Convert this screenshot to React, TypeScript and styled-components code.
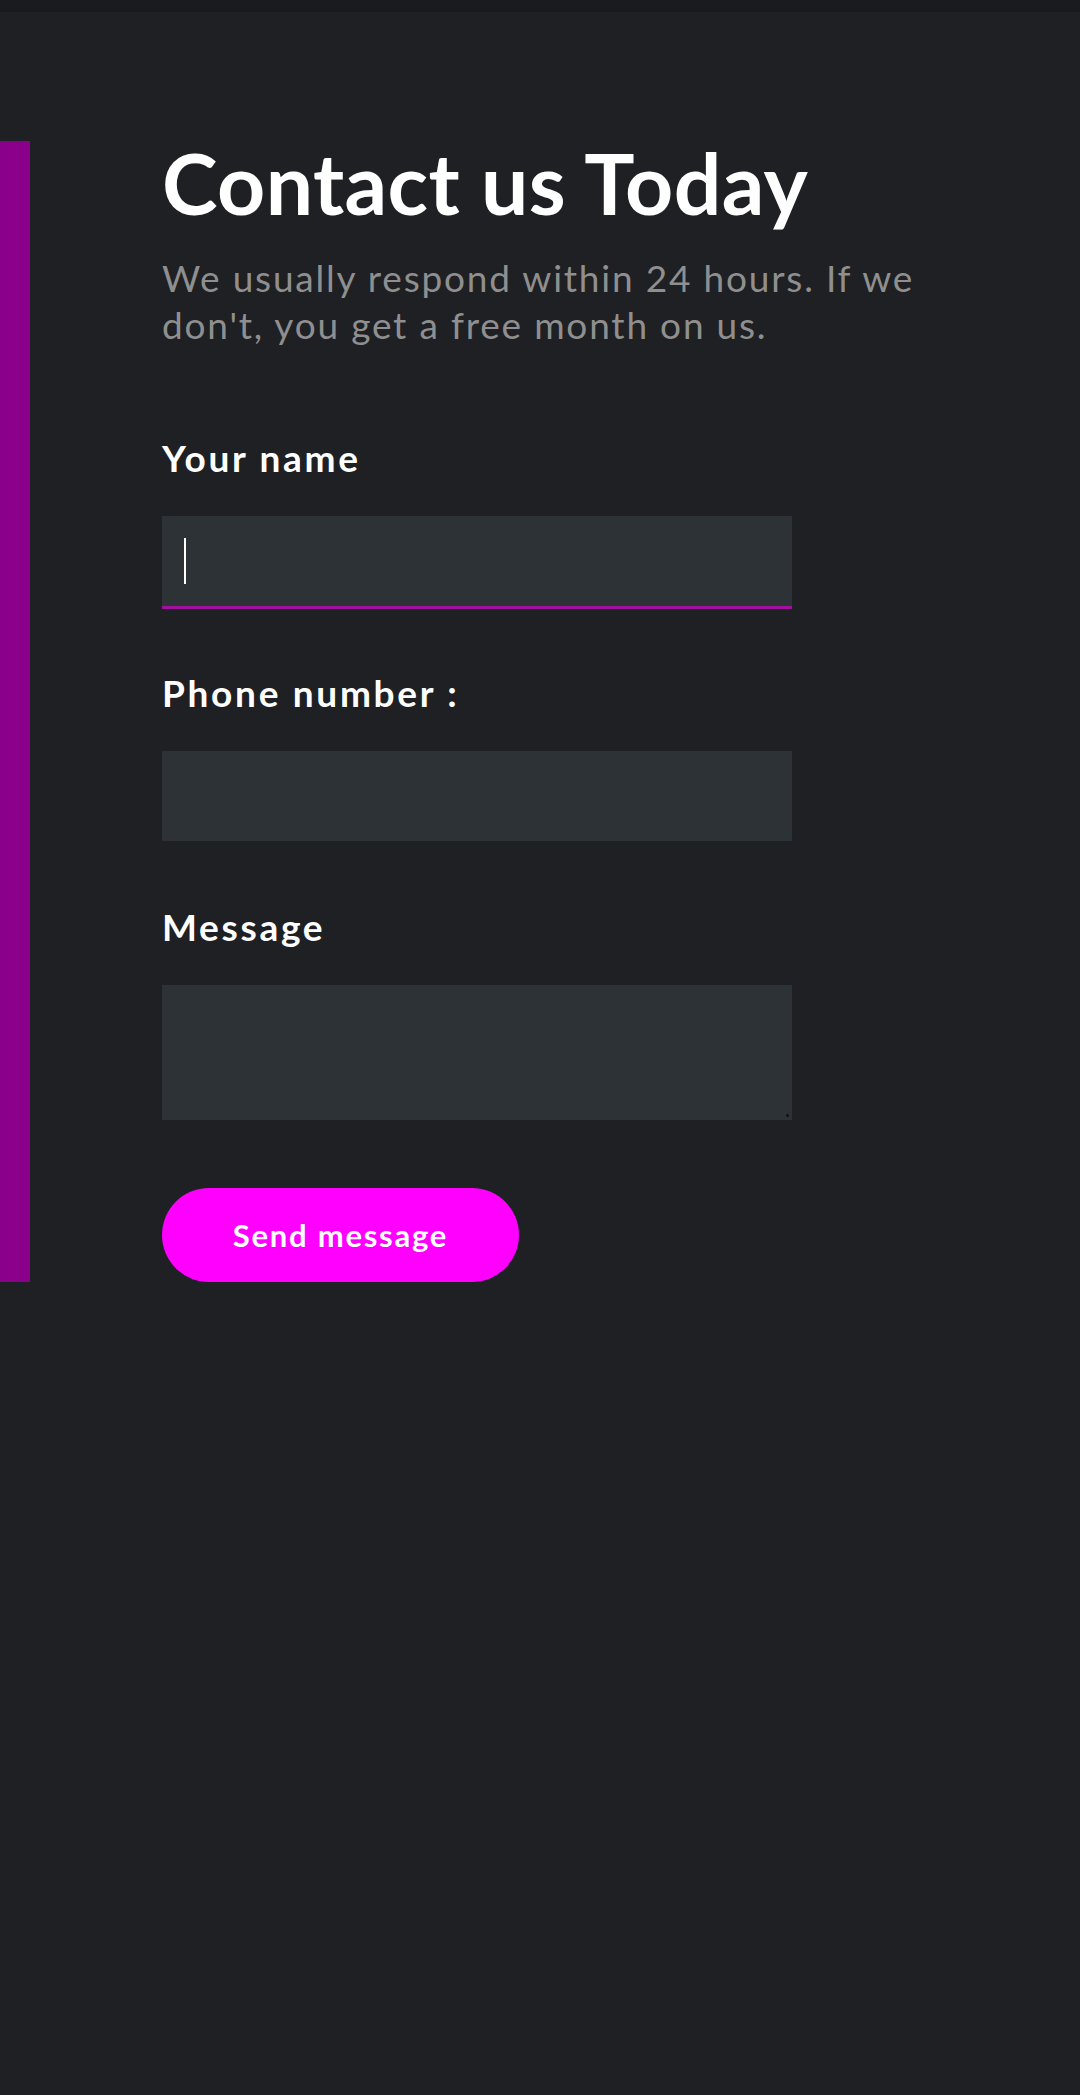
import React from "react";
import styled, { createGlobalStyle } from "styled-components";

const GlobalStyle = createGlobalStyle`
  html, body {
    margin: 0;
    padding: 0;
    background: #1e2023;
  }
  body {
    font-family: Lato, "Noto Sans", Arial, sans-serif;
    color: #ffffff;
  }
  * { box-sizing: border-box; }
`;

const Page = styled.div`
  min-height: 2095px;
  background: #1e2023;
  display: flex;
  flex-direction: column;
`;

const TopStrip = styled.div`
  height: 12px;
  background: #1a1b1f;
`;

const Section = styled.section`
  margin-top: 129px;
  border-left: 30px solid #8b008b;
  padding-left: 132px;
  display: flex;
  flex-direction: column;
`;

const Title = styled.h1`
  margin: 0;
  font-family: Lato, "Noto Sans", sans-serif;
  font-weight: 700;
  font-size: 84px;
  line-height: 84px;
  color: #ffffff;
  letter-spacing: 0.4px;
`;

const Subtitle = styled.p`
  margin: 29px 0 0;
  font-family: Lato, "Noto Sans", sans-serif;
  font-weight: 400;
  font-size: 37px;
  line-height: 47px;
  letter-spacing: 1.8px;
  color: #8f8f8f;
  max-width: 820px;
`;

const Form = styled.form`
  margin-top: 85px;
  display: flex;
  flex-direction: column;
  width: 630px;
`;

const Field = styled.div`
  display: flex;
  flex-direction: column;
  margin-bottom: 58.5px;
`;

const Label = styled.label`
  font-family: Lato, "Noto Sans", sans-serif;
  font-weight: 700;
  font-size: 37px;
  line-height: 50px;
  letter-spacing: 2.7px;
  color: #ffffff;
  margin-bottom: 33px;
`;

const InputWrap = styled.div`
  position: relative;
  width: 630px;
`;

const TextInput = styled.input<{ $focused?: boolean }>`
  display: block;
  width: 630px;
  height: 93px;
  margin: 0;
  padding: 0 22px;
  border: none;
  border-bottom: 3px solid ${(p) => (p.$focused ? "#a10fa1" : "transparent")};
  background: #2c3236;
  background-clip: padding-box;
  color: #ffffff;
  font-family: Lato, "Noto Sans", sans-serif;
  font-size: 37px;
  outline: none;
  border-radius: 0;
`;

const Caret = styled.span`
  position: absolute;
  left: 22px;
  top: 22px;
  width: 2px;
  height: 46px;
  background: #ffffff;
`;

const TextArea = styled.textarea`
  display: block;
  width: 630px;
  height: 135px;
  margin: 0;
  padding: 16px 22px;
  border: none;
  background: #2c3236;
  color: #ffffff;
  font-family: Lato, "Noto Sans", sans-serif;
  font-size: 37px;
  outline: none;
  resize: none;
  border-radius: 0;
`;

const Grip = styled.span`
  position: absolute;
  right: 3px;
  bottom: 3px;
  width: 3px;
  height: 3px;
  border-radius: 50%;
  background: #111315;
`;

const SendButton = styled.button`
  margin-top: 9px;
  width: 357px;
  height: 94px;
  border: none;
  border-radius: 47px;
  background: #ff00ff;
  color: #ffffff;
  font-family: Lato, "Noto Sans", sans-serif;
  font-weight: 700;
  font-size: 31px;
  letter-spacing: 1.75px;
  cursor: pointer;
  padding: 0;
`;

export default function App() {
  return (
    <Page>
      <GlobalStyle />
      <TopStrip />
      <Section>
        <Title>Contact us Today</Title>
        <Subtitle>
          We usually respond within 24 hours. If we don't, you get a free month on us.
        </Subtitle>
        <Form onSubmit={(e) => e.preventDefault()}>
          <Field>
            <Label htmlFor="name">Your name</Label>
            <InputWrap>
              <TextInput id="name" type="text" $focused />
              <Caret />
            </InputWrap>
          </Field>
          <Field>
            <Label htmlFor="phone">Phone number :</Label>
            <InputWrap>
              <TextInput id="phone" type="tel" />
            </InputWrap>
          </Field>
          <Field>
            <Label htmlFor="message">Message</Label>
            <InputWrap>
              <TextArea id="message" />
              <Grip />
            </InputWrap>
          </Field>
          <SendButton type="submit">Send message</SendButton>
        </Form>
      </Section>
    </Page>
  );
}
